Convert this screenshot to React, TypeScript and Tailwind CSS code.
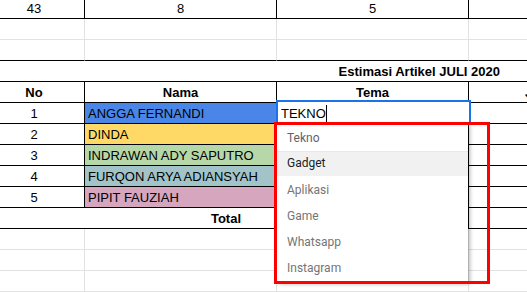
const blk = 'border-black';
const gry = 'border-[#e2e2e2]';

const cellBase = 'h-[21px] shrink-0 border-b border-r pt-[2px] leading-[18px] whitespace-nowrap overflow-hidden';

type RowProps = {
  cells: { text?: string; w: string; cls?: string }[];
  line: string;
  vline?: string;
};

function Row({ cells, line, vline }: RowProps) {
  return (
    <div className="flex">
      {cells.map((c, i) => (
        <div
          key={i}
          className={`${cellBase} ${c.w} ${line} ${vline ?? line} ${c.cls ?? ''}`}
          style={{ borderBottomColor: line === blk ? '#000' : '#e2e2e2', borderRightColor: (vline ?? line) === blk ? '#000' : '#e2e2e2' }}
        >
          {c.text}
        </div>
      ))}
    </div>
  );
}

const C0 = 'w-[101px] text-center';
const C1 = 'w-[192px]';
const C2 = 'w-[192px]';
const C3 = 'w-[192px] text-center';

const people = [
  { no: '1', name: 'ANGGA FERNANDI', bg: 'bg-[#4a86e8]' },
  { no: '2', name: 'DINDA', bg: 'bg-[#ffd966]' },
  { no: '3', name: 'INDRAWAN ADY SAPUTRO', bg: 'bg-[#b6d7a8]' },
  { no: '4', name: 'FURQON ARYA ADIANSYAH', bg: 'bg-[#a2c4c9]' },
  { no: '5', name: 'PIPIT FAUZIAH', bg: 'bg-[#d5a6bd]' },
];

const options = [
  { label: 'Aplikasi' },
  { label: 'Game' },
  { label: 'Whatsapp' },
  { label: 'Instagram' },
];

export default function App() {
  return (
    <div className="relative w-[527px] h-[292px] overflow-hidden bg-white text-[13px] text-black font-['Liberation_Sans',Arial,sans-serif]">
      <div className="-ml-[16px] -mt-[2px] flex flex-col">
        <Row
          line={blk}
          cells={[
            { text: '43', w: C0 },
            { text: '8', w: `${C1} text-center` },
            { text: '5', w: `${C2} text-center` },
            { w: C3 },
          ]}
        />
        <Row line={gry} cells={[{ w: C0 }, { w: C1 }, { w: C2 }, { w: C3 }]} />
        <Row line={blk} vline={gry} cells={[{ w: C0 }, { w: C1 }, { w: C2 }, { w: C3 }]} />
        <Row
          line={blk}
          vline={blk}
          cells={[{ text: 'Estimasi Artikel JULI 2020', w: 'w-[677px] text-right pr-[161px] font-bold border-r-0' }]}
        />
        <Row
          line={blk}
          cells={[
            { text: 'No', w: `${C0} font-bold` },
            { text: 'Nama', w: `${C1} text-center font-bold` },
            { text: 'Tema', w: `${C2} text-center font-bold` },
            { text: 'Jumlah', w: `${C3} text-left pl-[56px] font-bold` },
          ]}
        />
        {people.map((p) => (
          <Row
            key={p.no}
            line={blk}
            cells={[
              { text: p.no, w: C0 },
              { text: p.name, w: `${C1} pl-[3px] ${p.bg}` },
              { w: C2 },
              { w: C3 },
            ]}
          />
        ))}
        <Row
          line={blk}
          cells={[
            { text: 'Total', w: 'w-[485px] text-center font-bold' },
            { w: C3 },
          ]}
        />
        {[0, 1, 2, 3].map((i) => (
          <Row key={i} line={gry} cells={[{ w: C0 }, { w: C1 }, { w: C2 }, { w: C3 }]} />
        ))}
      </div>

      {/* cell editor */}
      <div className="absolute left-[276px] top-[100px] w-[195px] h-[24px] border-2 border-[#1a73e8] bg-white pl-[3px] pt-[3px] leading-[16px]">
        <span>TEKNO</span>
        <span className="inline-block w-px h-[17px] bg-black align-[-4px]" />
      </div>

      {/* autocomplete dropdown */}
      <div className="absolute left-[277px] top-[123px] w-[191px] h-[159px] bg-white pt-px shadow-[2px_2px_4px_rgba(0,0,0,0.28)] font-['Roboto',Arial,sans-serif] text-[12px] leading-[14px]">
        <div className="h-[28px] border-b border-[#e8e8e8] pl-[10px] pt-[7px] text-[#5f6368]">Tekno</div>
        <div className="h-[24px] bg-[#f1f1f1] pl-[10px] pt-[4px] text-[#202124]">Gadget</div>
        {options.map((o) => (
          <div key={o.label} className="h-[26px] pl-[10px] pt-[7px] text-[#757575]">
            {o.label}
          </div>
        ))}
      </div>

      {/* highlight box */}
      <div className="absolute left-[274px] top-[122px] w-[216px] h-[162px] border-[3px] border-[#ff0000]" />
    </div>
  );
}
